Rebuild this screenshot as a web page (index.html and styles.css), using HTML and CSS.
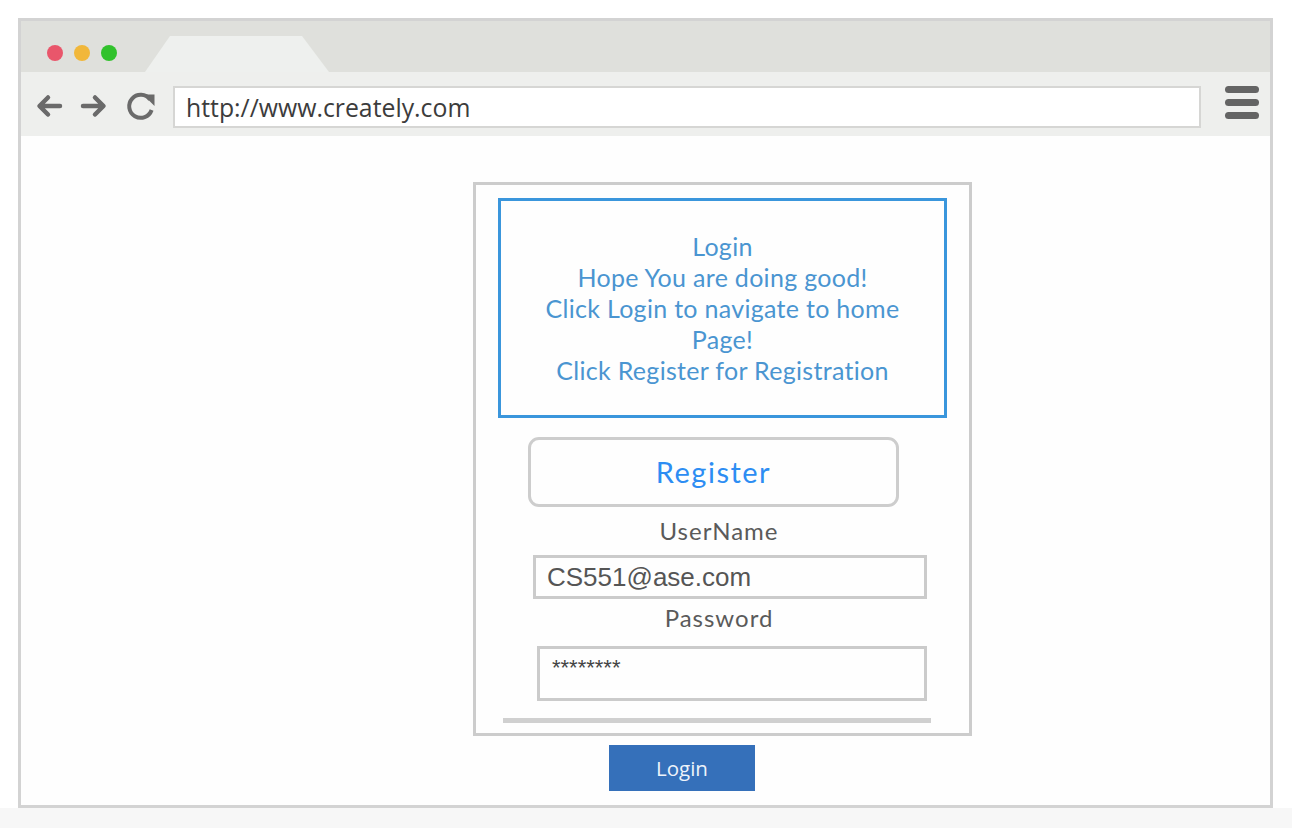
FILE: index.html
```html
<!DOCTYPE html>
<html>
<head>
<meta charset="utf-8">
<link rel="stylesheet" href="styles.css">
</head>
<body>
<div class="page">
  <div class="browser">
    <div class="tabbar">
      <div class="dots">
        <span class="dot red"></span>
        <span class="dot orange"></span>
        <span class="dot green"></span>
      </div>
      <div class="tab"></div>
    </div>
    <div class="toolbar">
      <div class="navs">
        <svg class="nav-icon" width="28" height="24" viewBox="0 0 28 24"><path d="M25 12H5M13 3.5L4.5 12L13 20.5" fill="none" stroke="#6a6a6a" stroke-width="4.5" stroke-linecap="round" stroke-linejoin="round"/></svg>
        <svg class="nav-icon fwd" width="28" height="24" viewBox="0 0 28 24"><path d="M3 12H23M15 3.5L23.5 12L15 20.5" fill="none" stroke="#6a6a6a" stroke-width="4.5" stroke-linecap="round" stroke-linejoin="round"/></svg>
        <svg class="nav-icon reload" width="32" height="32" viewBox="0 0 32 32"><path d="M25 9.5A11.5 11.5 0 1 0 26.6 20" fill="none" stroke="#6a6a6a" stroke-width="4"/><path d="M18 4.5H29.5V16Z" fill="#6a6a6a"/></svg>
      </div>
      <div class="address">http://www.creately.com</div>
      <div class="menu">
        <span></span><span></span><span></span>
      </div>
    </div>
    <div class="content">
      <div class="card">
        <div class="info">
          <div class="info-text">Login<br>Hope You are doing good!<br>Click Login to navigate to home<br>Page!<br>Click Register for Registration</div>
        </div>
        <div class="register">Register</div>
        <div class="label label-user">UserName</div>
        <div class="input input-user">CS551@ase.com</div>
        <div class="label label-pass">Password</div>
        <div class="input input-pass">********</div>
        <div class="divider"></div>
      </div>
      <div class="login-btn">Login</div>
    </div>
  </div>
  <div class="floor"></div>
</div>
</body>
</html>
```

FILE: styles.css
```css
* { box-sizing: border-box; }
html, body { margin: 0; padding: 0; }
body { background: #ffffff; font-family: "Lato", "Open Sans", sans-serif; }

.page { width: 1292px; height: 828px; padding-top: 18px; overflow: hidden; }

.browser {
  margin-left: 18px;
  width: 1255px;
  height: 790px;
  border: 3px solid #d3d3d3;
  background: #fefefe;
  display: flex;
  flex-direction: column;
}

.tabbar {
  height: 51px;
  background: #dfe0dc;
  display: flex;
  align-items: flex-start;
  padding-left: 26px;
  flex-shrink: 0;
}
.dots { display: flex; gap: 11px; margin-top: 24px; }
.dot { width: 16px; height: 16px; border-radius: 50%; display: block; }
.red { background: #e9566b; }
.orange { background: #f1b73a; }
.green { background: #31c22c; }
.tab {
  align-self: flex-end;
  margin-left: 28px;
  width: 184px;
  height: 36px;
  background: #eef0ee;
  clip-path: polygon(25px 0, 157px 0, 184px 100%, 0 100%);
}

.toolbar {
  height: 64px;
  background: #eeefed;
  display: flex;
  align-items: center;
  padding-left: 14px;
  padding-top: 4px;
  flex-shrink: 0;
}
.navs { display: flex; align-items: center; width: 138px; }
.nav-icon { display: block; }
.fwd { margin-left: 17px; }
.reload { margin-left: 17px; }
.address {
  width: 1028px;
  height: 42px;
  margin-top: 2px;
  background: #ffffff;
  border: 2px solid #d6d6d4;
  padding-left: 11px;
  font-family: "Open Sans", sans-serif;
  font-size: 24.8px;
  line-height: 38px;
  color: #3c3c3c;
}
.menu { margin-left: 24px; margin-top: -8px; display: flex; flex-direction: column; gap: 6px; }
.menu span { display: block; width: 34px; height: 7px; border-radius: 4px; background: #646464; }

.content {
  flex: 1;
  padding-left: 452px;
  padding-top: 46px;
  display: flex;
  flex-direction: column;
  align-items: flex-start;
}

.card {
  width: 499px;
  height: 554px;
  border: 3px solid #cccccc;
  background: #fefefe;
}

.info {
  margin-left: 22px;
  margin-top: 13px;
  width: 449px;
  height: 220px;
  border: 3px solid #3a96dc;
  display: flex;
  align-items: center;
  justify-content: center;
}
.info-text {
  text-align: center;
  font-family: "Lato", sans-serif;
  font-size: 25px;
  letter-spacing: 0.3px;
  line-height: 31px;
  color: #4a95d1;
}

.register {
  margin-top: 19px;
  margin-left: 52px;
  width: 371px;
  height: 70px;
  border: 3px solid #cdcdcd;
  border-radius: 11px;
  text-align: center;
  font-family: "Lato", sans-serif;
  font-size: 29px;
  letter-spacing: 1.5px;
  line-height: 64px;
  color: #2d8df3;
}

.label {
  width: 486px;
  text-align: center;
  font-family: "Lato", sans-serif;
  font-size: 24px;
  letter-spacing: 1px;
  line-height: 30px;
  color: #5a5a5a;
}
.label-user { margin-top: 9px; }
.label-pass { margin-top: 4px; }

.input {
  border: 3px solid #cbcbcb;
  background: #fefefe;
  font-family: "Liberation Sans", Arial, sans-serif;
  color: #555555;
}
.input-user {
  margin-top: 9px;
  margin-left: 57px;
  width: 394px;
  height: 44px;
  font-size: 26px;
  line-height: 38px;
  padding-left: 11px;
}
.input-pass {
  margin-top: 13px;
  margin-left: 61px;
  width: 390px;
  height: 55px;
  font-size: 22px;
  line-height: 26px;
  padding-left: 12px;
  padding-top: 6px;
  color: #444444;
}

.divider {
  margin-top: 17px;
  margin-left: 27px;
  width: 428px;
  height: 5px;
  background: #d0d0d0;
}

.login-btn {
  margin-top: 9px;
  margin-left: 136px;
  width: 146px;
  height: 46px;
  background: #3570ba;
  color: #eef3fa;
  font-family: "Open Sans", sans-serif;
  font-size: 20.5px;
  line-height: 46px;
  text-align: center;
}

.floor { height: 20px; background: #f7f7f7; }
```
